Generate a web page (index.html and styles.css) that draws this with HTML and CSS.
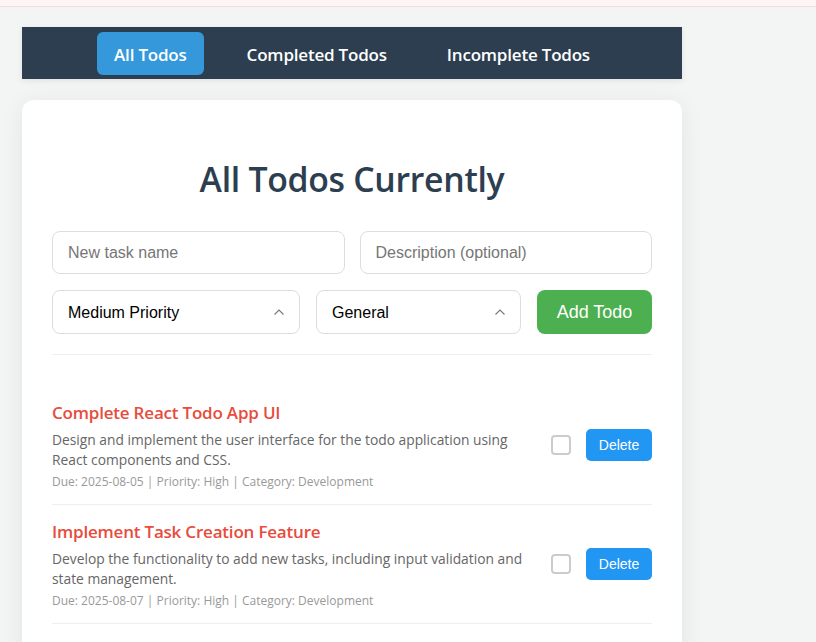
FILE: index.html
```html
<!DOCTYPE html>
<html>
<head>
<meta charset="utf-8">
<link rel="stylesheet" href="styles.css">
</head>
<body>
<div class="top-strip"></div>
<div class="app">
  <nav class="nav">
    <button class="nav-btn active">All Todos</button>
    <button class="nav-btn">Completed Todos</button>
    <button class="nav-btn">Incomplete Todos</button>
  </nav>
  <main class="card">
    <h1 class="title">All Todos Currently</h1>
    <div class="form">
      <div class="row">
        <input class="field" type="text" placeholder="New task name">
        <input class="field" type="text" placeholder="Description (optional)">
      </div>
      <div class="row">
        <select class="field select sel-priority"><option>Medium Priority</option></select>
        <select class="field select sel-category"><option>General</option></select>
        <button class="add-btn">Add Todo</button>
      </div>
    </div>
    <ul class="list">
      <li class="item">
        <div class="item-text">
          <h3 class="item-title">Complete React Todo App UI</h3>
          <p class="item-desc">Design and implement the user interface for the todo application using React components and CSS.</p>
          <p class="item-meta">Due: 2025-08-05 | Priority: High | Category: Development</p>
        </div>
        <div class="item-actions">
          <span class="check"></span>
          <button class="del-btn">Delete</button>
        </div>
      </li>
      <li class="item">
        <div class="item-text">
          <h3 class="item-title">Implement Task Creation Feature</h3>
          <p class="item-desc">Develop the functionality to add new tasks, including input validation and state management.</p>
          <p class="item-meta">Due: 2025-08-07 | Priority: High | Category: Development</p>
        </div>
        <div class="item-actions">
          <span class="check"></span>
          <button class="del-btn">Delete</button>
        </div>
      </li>
    </ul>
  </main>
</div>
</body>
</html>
```

FILE: styles.css
```css
* { box-sizing: border-box; }
html, body { margin: 0; padding: 0; }
body {
  background: #f3f4f4;
  font-family: "Open Sans", "Noto Sans", sans-serif;
  height: 642px;
  overflow: hidden;
}
.top-strip {
  height: 7px;
  background: #fff5f5;
  border-bottom: 1px solid #f6dcdc;
}
.app {
  width: 660px;
  margin: 20px 0 0 22px;
}
.nav {
  background: #2c3e50;
  height: 52px;
  display: flex;
  justify-content: center;
  align-items: center;
  gap: 26px;
  box-shadow: 0 2px 6px rgba(0,0,0,0.08);
}
.nav-btn {
  background: transparent;
  border: none;
  color: #fff;
  font-family: "Open Sans", sans-serif;
  font-weight: 600;
  font-size: 17px;
  height: 43px;
  padding: 2px 17px 0;
  border-radius: 6px;
  letter-spacing: -0.2px;
}
.nav-btn.active { background: #3498db; }
.card {
  margin-top: 21px;
  background: #fff;
  border-radius: 12px;
  box-shadow: 0 4px 24px rgba(0,0,0,0.07);
  padding: 55px 30px 30px;
  height: 600px;
}
.title {
  margin: 0 0 28px;
  text-align: center;
  color: #2c3e50;
  font-size: 33.8px;
  font-weight: 600;
  line-height: 48px;
  letter-spacing: -0.3px;
}
.form {
  display: flex;
  flex-direction: column;
  gap: 16px;
  padding-bottom: 20px;
  border-bottom: 1px solid #eee;
}
.row { display: flex; gap: 15px; }
.row + .row { gap: 16px; }
.field {
  flex: 1;
  height: 44px;
  border: 1px solid #ddd;
  border-radius: 8px;
  padding: 0 15px;
  font-family: "Liberation Sans", Arial, sans-serif;
  font-size: 16px;
  color: #000;
  background: #fff;
  outline: none;
}
.row:first-child .field { height: 43px; }
.field::placeholder { color: #767676; }
.select {
  appearance: none;
  -webkit-appearance: none;
  background-image: url("data:image/svg+xml;utf8,<svg xmlns='http://www.w3.org/2000/svg' width='12' height='8' viewBox='0 0 12 8'><path d='M1.5 6.5 L6 2 L10.5 6.5' fill='none' stroke='%23777' stroke-width='1.1'/></svg>");
  background-repeat: no-repeat;
  background-position: right 14px center;
}
.sel-priority { flex: 0 0 248px; }
.sel-category { flex: 0 0 205px; }
.add-btn {
  flex: 0 0 115px;
  height: 44px;
  background: #4caf50;
  color: #fff;
  border: none;
  border-radius: 8px;
  font-family: "Liberation Sans", Arial, sans-serif;
  font-size: 18px;
}
.list {
  list-style: none;
  margin: 31px 0 0;
  padding: 0;
}
.item {
  display: flex;
  align-items: center;
  gap: 20px;
  padding: 15px 0 12px;
  border-bottom: 1px solid #eee;
}
.item-text { flex: 1; }
.item-title {
  margin: 0 0 5px;
  color: #e74c3c;
  font-size: 17px;
  font-weight: 600;
  line-height: 24px;
  letter-spacing: -0.2px;
}
.item-desc {
  margin: 0 0 2px;
  color: #666;
  font-size: 13.8px;
  line-height: 20px;
}
.item-meta {
  margin: 0;
  color: #999;
  font-size: 12px;
  line-height: 20px;
}
.item-actions {
  display: flex;
  align-items: center;
  gap: 15px;
  margin-top: -4px;
}
.check {
  width: 20px;
  height: 20px;
  border: 2px solid #ccc;
  border-radius: 4px;
  background: #fff;
}
.del-btn {
  width: 66px;
  height: 32px;
  background: #2196f3;
  color: #fff;
  border: none;
  border-radius: 5px;
  font-family: "Liberation Sans", Arial, sans-serif;
  font-size: 14px;
}
```
